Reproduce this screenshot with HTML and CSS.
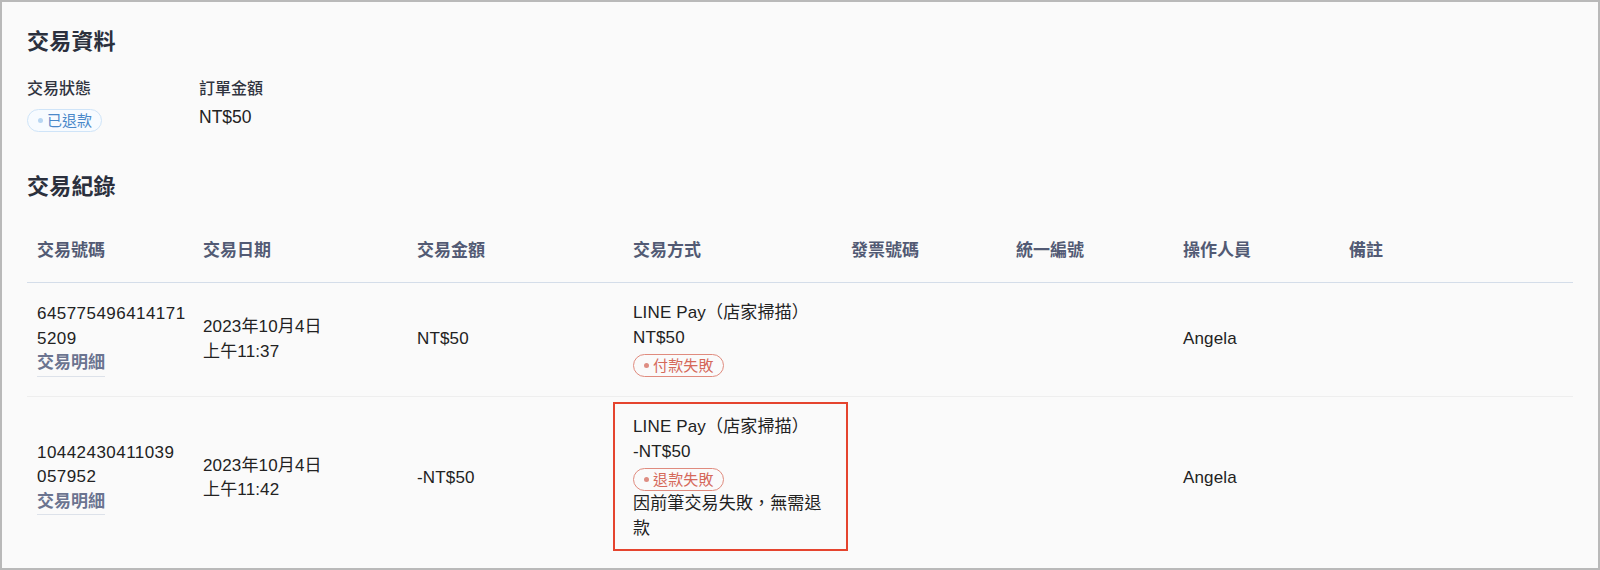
FILE: index.html
```html
<!DOCTYPE html>
<html lang="zh-Hant">
<head>
<meta charset="utf-8">
<title>交易資料</title>
<link rel="stylesheet" href="styles.css">
</head>
<body>
<div class="frame">
  <h2 class="section-title">交易資料</h2>
  <div class="info">
    <div class="info-item">
      <div class="info-label">交易狀態</div>
      <div><span class="badge badge-blue"><span class="dot"></span>已退款</span></div>
    </div>
    <div class="info-item">
      <div class="info-label">訂單金額</div>
      <div class="info-value">NT$50</div>
    </div>
  </div>

  <h2 class="section-title section-title-2">交易紀錄</h2>
  <table class="records">
    <colgroup>
      <col class="c-id"><col class="c-date"><col class="c-amount"><col class="c-method">
      <col class="c-invoice"><col class="c-tax"><col class="c-op"><col class="c-note">
    </colgroup>
    <thead>
      <tr>
        <th>交易號碼</th><th>交易日期</th><th>交易金額</th><th>交易方式</th>
        <th>發票號碼</th><th>統一編號</th><th>操作人員</th><th>備註</th>
      </tr>
    </thead>
    <tbody>
      <tr>
        <td><div class="txn-id">645775496414171<br>5209</div><a class="detail-link" href="#">交易明細</a></td>
        <td>2023年10月4日<br>上午11:37</td>
        <td>NT$50</td>
        <td>
          <div class="pay">
            <div>LINE Pay（店家掃描）</div>
            <div>NT$50</div>
            <div><span class="badge badge-red"><span class="dot"></span>付款失敗</span></div>
          </div>
        </td>
        <td></td><td></td>
        <td>Angela</td>
        <td></td>
      </tr>
      <tr>
        <td><div class="txn-id">10442430411039<br>057952</div><a class="detail-link" href="#">交易明細</a></td>
        <td>2023年10月4日<br>上午11:42</td>
        <td>-NT$50</td>
        <td>
          <div class="pay">
            <div>LINE Pay（店家掃描）</div>
            <div>-NT$50</div>
            <div><span class="badge badge-red"><span class="dot"></span>退款失敗</span></div>
            <div>因前筆交易失敗，無需退款</div>
            <span class="highlight"></span>
          </div>
        </td>
        <td></td><td></td>
        <td>Angela</td>
        <td></td>
      </tr>
    </tbody>
  </table>
</div>
</body>
</html>
```

FILE: styles.css
```css
* { box-sizing: border-box; }

html, body {
  margin: 0;
  padding: 0;
  background: #fafafa;
}

body {
  font-family: "Liberation Sans", "Noto Sans CJK TC", sans-serif;
  color: #222;
  font-size: 17px;
}

.frame {
  width: 1600px;
  height: 570px;
  border: 2px solid #b9b9b9;
  background: #fafafa;
  padding: 25px 25px 0;
  overflow: hidden;
}

.section-title {
  margin: 0;
  font-size: 22px;
  line-height: 30px;
  font-weight: 700;
  color: #2b303d;
  letter-spacing: 0.2px;
}

.section-title-2 {
  margin-top: 40px;
}

.info {
  display: grid;
  grid-template-columns: 172px auto;
  margin-top: 21px;
}

.info-item {
  display: flex;
  flex-direction: column;
  align-items: flex-start;
}

.info-label {
  font-size: 16px;
  line-height: 22px;
  font-weight: 500;
  color: #30343f;
}

.info-value {
  margin-top: 5px;
  line-height: 24px;
  font-size: 17.5px;
  color: #222;
}

.info-item .badge {
  margin-top: 9px;
}

.badge {
  display: inline-flex;
  align-items: center;
  height: 23px;
  padding: 0 9px 0 10px;
  border: 1px solid;
  border-radius: 12px;
  font-size: 15px;
  line-height: 21px;
  white-space: nowrap;
}

.badge .dot {
  width: 5px;
  height: 5px;
  border-radius: 50%;
  margin-right: 4px;
  flex: none;
}

.badge-blue {
  border-color: #cfe4f8;
  background: #f7fbff;
  color: #4a88c9;
}
.badge-blue .dot { background: #b8d6f2; }

.badge-red {
  border-color: #e08b7e;
  color: #d5695a;
}
.badge-red .dot { background: #de8d82; }

.records {
  width: 1546px;
  margin-top: 17px;
  border-collapse: collapse;
  table-layout: fixed;
}

.c-id { width: 166px; }
.c-date { width: 214px; }
.c-amount { width: 216px; }
.c-method { width: 218px; }
.c-invoice { width: 165px; }
.c-tax { width: 167px; }
.c-op { width: 166px; }
.c-note { width: 234px; }

.records th {
  text-align: left;
  font-size: 17px;
  line-height: 24px;
  font-weight: 600;
  color: #525a74;
  padding: 20px 10px 19px;
  border-bottom: 1px solid #d4dde9;
}

.records td {
  vertical-align: middle;
  padding: 18px 10px;
  line-height: 24.5px;
  font-size: 17px;
  color: #222;
  border-bottom: 1px solid #eeeeee;
  letter-spacing: 0.15px;
}

.records tbody tr:last-child td {
  border-bottom: none;
}

.txn-id {
  white-space: nowrap;
  letter-spacing: 0.45px;
}

.detail-link {
  display: inline-block;
  color: #6b7490;
  font-weight: 600;
  text-decoration: none;
  border-bottom: 1px solid #dde2ea;
  letter-spacing: 0;
}

.pay {
  position: relative;
}

.pay .badge {
  margin: 4px 0 1px;
}

.highlight {
  position: absolute;
  left: -20px;
  right: -17px;
  top: -13px;
  bottom: -10px;
  border: 2px solid #e5442e;
  pointer-events: none;
}
```
